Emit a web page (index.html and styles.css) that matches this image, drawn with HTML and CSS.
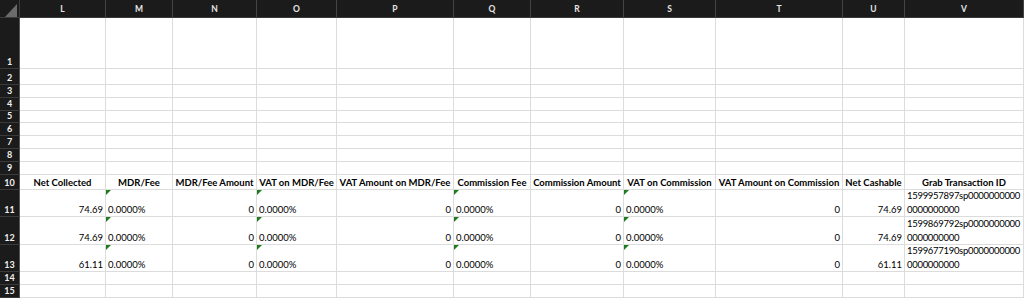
FILE: index.html
```html
<!DOCTYPE html>
<html>
<head>
<meta charset="utf-8">
<link rel="stylesheet" href="styles.css">
</head>
<body>
<div class="sheet">
  <div class="corner"><svg width="20" height="18" viewBox="0 0 20 18"><polygon points="17,4 17,17 5,17" fill="#6b6b6b"/></svg></div>
  <div class="colhead">L</div>
  <div class="colhead">M</div>
  <div class="colhead">N</div>
  <div class="colhead">O</div>
  <div class="colhead">P</div>
  <div class="colhead">Q</div>
  <div class="colhead">R</div>
  <div class="colhead">S</div>
  <div class="colhead">T</div>
  <div class="colhead">U</div>
  <div class="colhead">V</div>

  <div class="rowhead">1</div>
  <div class="c"></div><div class="c"></div><div class="c"></div><div class="c"></div><div class="c"></div><div class="c"></div><div class="c"></div><div class="c"></div><div class="c"></div><div class="c"></div><div class="c"></div>
  <div class="rowhead">2</div>
  <div class="c"></div><div class="c"></div><div class="c"></div><div class="c"></div><div class="c"></div><div class="c"></div><div class="c"></div><div class="c"></div><div class="c"></div><div class="c"></div><div class="c"></div>
  <div class="rowhead">3</div>
  <div class="c"></div><div class="c"></div><div class="c"></div><div class="c"></div><div class="c"></div><div class="c"></div><div class="c"></div><div class="c"></div><div class="c"></div><div class="c"></div><div class="c"></div>
  <div class="rowhead">4</div>
  <div class="c"></div><div class="c"></div><div class="c"></div><div class="c"></div><div class="c"></div><div class="c"></div><div class="c"></div><div class="c"></div><div class="c"></div><div class="c"></div><div class="c"></div>
  <div class="rowhead">5</div>
  <div class="c"></div><div class="c"></div><div class="c"></div><div class="c"></div><div class="c"></div><div class="c"></div><div class="c"></div><div class="c"></div><div class="c"></div><div class="c"></div><div class="c"></div>
  <div class="rowhead">6</div>
  <div class="c"></div><div class="c"></div><div class="c"></div><div class="c"></div><div class="c"></div><div class="c"></div><div class="c"></div><div class="c"></div><div class="c"></div><div class="c"></div><div class="c"></div>
  <div class="rowhead">7</div>
  <div class="c"></div><div class="c"></div><div class="c"></div><div class="c"></div><div class="c"></div><div class="c"></div><div class="c"></div><div class="c"></div><div class="c"></div><div class="c"></div><div class="c"></div>
  <div class="rowhead">8</div>
  <div class="c"></div><div class="c"></div><div class="c"></div><div class="c"></div><div class="c"></div><div class="c"></div><div class="c"></div><div class="c"></div><div class="c"></div><div class="c"></div><div class="c"></div>
  <div class="rowhead">9</div>
  <div class="c"></div><div class="c"></div><div class="c"></div><div class="c"></div><div class="c"></div><div class="c"></div><div class="c"></div><div class="c"></div><div class="c"></div><div class="c"></div><div class="c"></div>

  <div class="rowhead">10</div>
  <div class="c h">Net Collected</div>
  <div class="c h">MDR/Fee</div>
  <div class="c h">MDR/Fee Amount</div>
  <div class="c h">VAT on MDR/Fee</div>
  <div class="c h">VAT Amount on MDR/Fee</div>
  <div class="c h">Commission Fee</div>
  <div class="c h">Commission Amount</div>
  <div class="c h">VAT on Commission</div>
  <div class="c h">VAT Amount on Commission</div>
  <div class="c h">Net Cashable</div>
  <div class="c h">Grab Transaction ID</div>

  <div class="rowhead">11</div>
  <div class="c num">74.69</div>
  <div class="c txt flag">0.0000%</div>
  <div class="c num">0</div>
  <div class="c txt flag">0.0000%</div>
  <div class="c num">0</div>
  <div class="c txt flag">0.0000%</div>
  <div class="c num">0</div>
  <div class="c txt flag">0.0000%</div>
  <div class="c num">0</div>
  <div class="c num">74.69</div>
  <div class="c wrap">1599957897sp0000000000<br>0000000000</div>

  <div class="rowhead">12</div>
  <div class="c num">74.69</div>
  <div class="c txt flag">0.0000%</div>
  <div class="c num">0</div>
  <div class="c txt flag">0.0000%</div>
  <div class="c num">0</div>
  <div class="c txt flag">0.0000%</div>
  <div class="c num">0</div>
  <div class="c txt flag">0.0000%</div>
  <div class="c num">0</div>
  <div class="c num">74.69</div>
  <div class="c wrap">1599869792sp0000000000<br>0000000000</div>

  <div class="rowhead">13</div>
  <div class="c num">61.11</div>
  <div class="c txt flag">0.0000%</div>
  <div class="c num">0</div>
  <div class="c txt flag">0.0000%</div>
  <div class="c num">0</div>
  <div class="c txt flag">0.0000%</div>
  <div class="c num">0</div>
  <div class="c txt flag">0.0000%</div>
  <div class="c num">0</div>
  <div class="c num">61.11</div>
  <div class="c wrap">1599677190sp0000000000<br>0000000000</div>

  <div class="rowhead">14</div>
  <div class="c"></div><div class="c"></div><div class="c"></div><div class="c"></div><div class="c"></div><div class="c"></div><div class="c"></div><div class="c"></div><div class="c"></div><div class="c"></div><div class="c"></div>
  <div class="rowhead">15</div>
  <div class="c"></div><div class="c"></div><div class="c"></div><div class="c"></div><div class="c"></div><div class="c"></div><div class="c"></div><div class="c"></div><div class="c"></div><div class="c"></div><div class="c"></div>
</div>
</body>
</html>
```

FILE: styles.css
```css
html, body {
  margin: 0;
  padding: 0;
  background: #ffffff;
}

.sheet {
  display: grid;
  grid-template-columns: 20px 86px 67px 84px 80px 117px 77px 93px 92px 127px 62px 119px;
  grid-template-rows: 18px 51px 16px 13px 13px 12px 13px 13px 13px 13px 15px 27px 28px 27px 13px 13px;
  width: 1024px;
  height: 298px;
  overflow: hidden;
  font-family: Lato, "Liberation Sans", sans-serif;
  color: #000;
}

.sheet > div {
  box-sizing: border-box;
  overflow: hidden;
}

.corner {
  background: #1b1b1b;
  border-right: 1px solid #3c3c3c;
  border-bottom: 1px solid #3c3c3c;
}

.corner svg {
  display: block;
}

.colhead {
  background: #1b1b1b;
  color: #e6e6e6;
  font-weight: 700;
  font-size: 8.5px;
  display: flex;
  align-items: center;
  justify-content: center;
  border-right: 1px solid #444444;
  border-bottom: 1px solid #3a3a3a;
}

.rowhead {
  background: #1b1b1b;
  color: #f0f0f0;
  font-weight: 700;
  font-size: 9px;
  line-height: 11px;
  display: flex;
  align-items: flex-end;
  justify-content: center;
  padding-bottom: 1px;
  border-bottom: 1px solid #3a3a3a;
  border-right: 1px solid #555555;
}

.c {
  position: relative;
  border-right: 1px solid #dcdcdc;
  border-bottom: 1px solid #dcdcdc;
  font-size: 9.5px;
  line-height: 12px;
  display: flex;
  align-items: flex-end;
  padding: 0 2px 0 2px;
  white-space: nowrap;
}

.h {
  font-weight: 700;
  justify-content: center;
}

.num {
  justify-content: flex-end;
}

.txt {
  justify-content: flex-start;
}

.wrap {
  line-height: 13.5px;
  letter-spacing: -0.3px;
  padding-bottom: 0;
}

.flag::before {
  content: "";
  position: absolute;
  top: 0;
  left: 0;
  border-top: 5px solid #1e7b1e;
  border-right: 5px solid transparent;
}
```
